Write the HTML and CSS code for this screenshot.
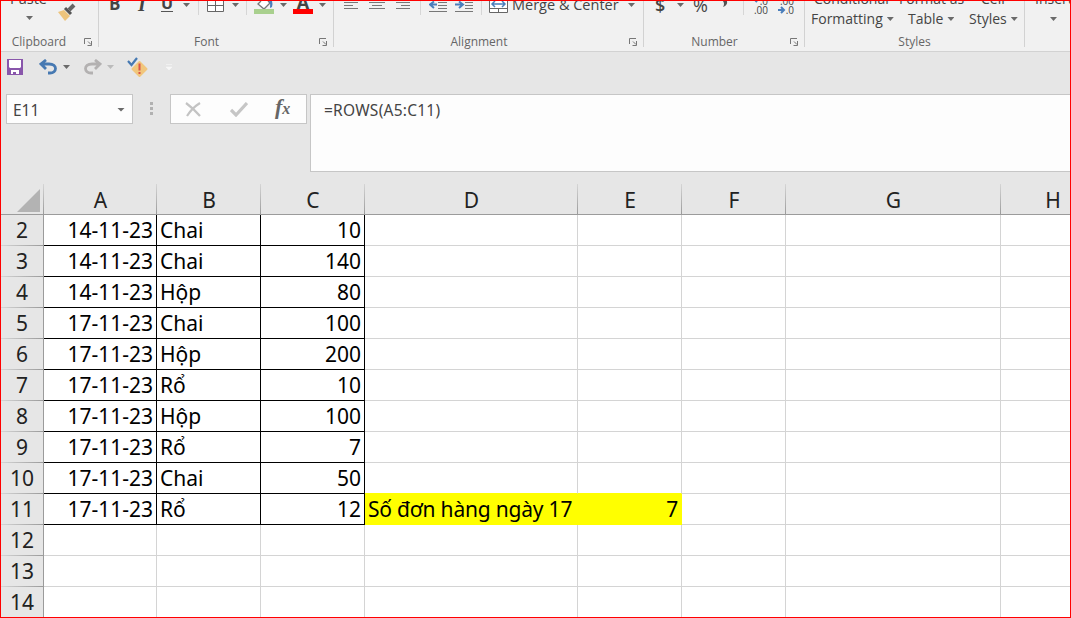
FILE: index.html
```html
<!DOCTYPE html>
<html lang="vi">
<head>
    <meta charset="UTF-8">
    <meta name="viewport" content="width=device-width, initial-scale=1.0">
    <title>Excel</title>
    <link rel="stylesheet" href="styles.css">
</head>
<body>
    <svg width="0" height="0" class="defs">
        <symbol id="launch" viewBox="0 0 9 9">
            <path d="M.5 6V.5H7M4 3.500l3 3M7.500 3v4.500H3.500" fill="none" stroke="#777"/>
        </symbol>
    </svg>
    <div class="window">
        <div class="ribbon">
            <div class="group clipboard">
                <div class="tools">
                    <div class="paste"><span>Paste</span><i class="arrow"></i></div>
                    <svg width="20" height="22" viewBox="0 0 20 22">
                        <path d="M1 11l6-2 6 6-5 5z" fill="#edc47c"/>
                        <path d="M8 7l6 6" stroke="#555" stroke-width="3"/>
                        <path d="M12 9l5-5" stroke="#666" stroke-width="4"/>
                    </svg>
                </div>
                <div class="group-name">Clipboard<svg class="launch"><use href="#launch"/></svg></div>
            </div>
            <div class="group font">
                <div class="tools">
                    <b class="letter">B</b>
                    <b class="letter italic">I</b>
                    <b class="letter underline">U</b>
                    <i class="arrow"></i>
                    <i class="sep"></i>
                    <svg width="18" height="12"><path d="M.5 0v10.500h16V0M8.500 0v10M0 4.500h17" fill="#fff" stroke="#666"/></svg>
                    <i class="arrow"></i>
                    <i class="sep"></i>
                    <svg width="21" height="14">
                        <path d="M7 0L4 3l6 5 6-6-2-2" fill="#fff" stroke="#777" stroke-width="1.300"/>
                        <path d="M15 0h3q1 3 0 6l-2 1q1-4-1-7z" fill="#4a7ebb"/>
                        <path d="M0 8h20v5H0z" fill="#a9d08e"/>
                    </svg>
                    <i class="arrow"></i>
                    <div class="font-color"><b>A</b></div>
                    <i class="arrow"></i>
                </div>
                <div class="group-name">Font<svg class="launch"><use href="#launch"/></svg></div>
            </div>
            <div class="group alignment">
                <div class="tools">
                    <svg width="16" height="10"><path d="M0 1.500h14M0 4.500h9M0 7.500h14" stroke="#777"/></svg>
                    <svg width="16" height="10"><path d="M0 1.500h16M3 4.500h10M0 7.500h16" stroke="#777"/></svg>
                    <svg width="16" height="10"><path d="M0 1.500h14M5 4.500h9M0 7.500h14" stroke="#777"/></svg>
                    <i class="sep"></i>
                    <svg width="18" height="12">
                        <path d="M9 1.500h9M9 4.500h9M9 7.500h9M0 10.500h18" stroke="#777"/>
                        <path d="M8 3.500H2M5 .5l-4 3 4 3.500" fill="none" stroke="#4a7ebb" stroke-width="2"/>
                    </svg>
                    <svg width="18" height="12">
                        <path d="M10 1.500h8M10 4.500h8M10 7.500h8M0 10.500h18" stroke="#777"/>
                        <path d="M0 3.500h7M4 .5l4 3-4 3.500" fill="none" stroke="#4a7ebb" stroke-width="2"/>
                    </svg>
                    <i class="sep"></i>
                    <svg width="19" height="12">
                        <path d="M.5 0v11.500h18V0M.5 7.500h18M9.500 7v4" fill="#fff" stroke="#666"/>
                        <path d="M3 3h13M6 0L3 3l3 3M13 0l3 3-3 3" fill="none" stroke="#4a7ebb" stroke-width="1.500"/>
                    </svg>
                    <span class="merge">Merge &amp; Center</span>
                    <i class="arrow"></i>
                </div>
                <div class="group-name">Alignment<svg class="launch"><use href="#launch"/></svg></div>
            </div>
            <div class="group number">
                <div class="tools">
                    <span class="symbol bold">$</span>
                    <i class="arrow"></i>
                    <span class="symbol">%</span>
                    <svg width="8" height="8"><path d="M2 0h4q1 4-4 6 2-3 0-6z" fill="#555"/></svg>
                    <i class="sep"></i>
                    <div class="decimal">
                        <div><svg width="7" height="4"><path d="M0 0h6M1 0l3 3" stroke="#4a7ebb" stroke-width="2"/></svg>.0</div>
                        <div>.00</div>
                    </div>
                    <div class="decimal">
                        <div>.00</div>
                        <div><svg width="8" height="8"><path d="M0 4h6M3 1l3 3-3 3" fill="none" stroke="#4a7ebb" stroke-width="2"/></svg>.0</div>
                    </div>
                </div>
                <div class="group-name">Number<svg class="launch"><use href="#launch"/></svg></div>
            </div>
            <div class="group styles">
                <div class="tools">
                    <div class="big-button conditional"><span>Conditional</span><span>Formatting<i class="arrow"></i></span></div>
                    <div class="big-button format-as"><span>Format as</span><span>Table<i class="arrow"></i></span></div>
                    <div class="big-button cell-styles"><span>Cell</span><span>Styles<i class="arrow"></i></span></div>
                </div>
                <div class="group-name">Styles</div>
            </div>
            <div class="group cells">
                <div class="tools">
                    <div class="big-button insert"><span>Insert</span><i class="arrow"></i></div>
                </div>
            </div>
        </div>

        <div class="quick-access">
            <svg width="16" height="16">
                <path d="M0 0h16v16H0z" fill="#8956ab"/>
                <path d="M2 1h12v7l-1 1H3L2 8zM4 11h8v4H9v-2H6v2H4z" fill="#fff"/>
            </svg>
            <svg width="19" height="17" viewBox="0 0 19 17">
                <path d="M2 5h8c9 0 8 9 1 9H9M7 1L2 5l5 5" fill="none" stroke="#4679b2" stroke-width="2.800"/>
            </svg>
            <i class="arrow"></i>
            <svg width="19" height="17" viewBox="0 0 19 17">
                <path d="M17 5H9C0 5 1 14 8 14h2M12 1l5 4-5 5" fill="none" stroke="#b3b1b1" stroke-width="2.800"/>
            </svg>
            <i class="arrow pale"></i>
            <svg width="21" height="21" viewBox="0 0 21 21">
                <path d="M12.500 5l7 7-7 7-7-7z" fill="#f1c67c" stroke="#f1c67c" stroke-width="2" stroke-linejoin="round"/>
                <path d="M12.500 6.500v7M12.500 15v2" stroke="#d9534a" stroke-width="2"/>
                <path d="M1 4l3.500 4L10 1" fill="none" stroke="#4679b2" stroke-width="2.200"/>
            </svg>
            <svg width="6" height="7"><path d="M0 .5h6M0 3h6L3 6z" fill="#f7f7f7" stroke="#f7f7f7" stroke-width=".6"/></svg>
        </div>

        <div class="formula-bar">
            <div class="name-box">E11<i class="arrow"></i></div>
            <div class="dots"><i></i><i></i><i></i></div>
            <div class="entry-buttons">
                <svg width="17" height="15"><path d="M1 1q8 6 14 13M15 1Q7 6 2 14" fill="none" stroke="#c3c3c3" stroke-width="2.200"/></svg>
                <svg width="18" height="15"><path d="M1 8l5 5L17 1" fill="none" stroke="#c6c6c6" stroke-width="3.200"/></svg>
                <span class="fx">f<small>x</small></span>
            </div>
            <div class="formula">=ROWS(A5:C11)</div>
        </div>

        <table class="sheet">
            <colgroup>
                <col class="w-head"><col class="w-a"><col class="w-std"><col class="w-std"><col class="w-d"><col class="w-std"><col class="w-std"><col class="w-g"><col class="w-std">
            </colgroup>
            <thead>
                <tr><th class="corner"><svg width="23" height="23"><path d="M23 0v23H0z" fill="#b3b3b3"/></svg></th><th>A</th><th>B</th><th>C</th><th>D</th><th>E</th><th>F</th><th>G</th><th>H</th></tr>
            </thead>
            <tbody>
                <tr class="data"><th>2</th><td>14-11-23</td><td>Chai</td><td>10</td><td></td><td></td><td></td><td></td><td></td></tr>
                <tr class="data"><th>3</th><td>14-11-23</td><td>Chai</td><td>140</td><td></td><td></td><td></td><td></td><td></td></tr>
                <tr class="data"><th>4</th><td>14-11-23</td><td>Hộp</td><td>80</td><td></td><td></td><td></td><td></td><td></td></tr>
                <tr class="data"><th>5</th><td>17-11-23</td><td>Chai</td><td>100</td><td></td><td></td><td></td><td></td><td></td></tr>
                <tr class="data"><th>6</th><td>17-11-23</td><td>Hộp</td><td>200</td><td></td><td></td><td></td><td></td><td></td></tr>
                <tr class="data"><th>7</th><td>17-11-23</td><td>Rổ</td><td>10</td><td></td><td></td><td></td><td></td><td></td></tr>
                <tr class="data"><th>8</th><td>17-11-23</td><td>Hộp</td><td>100</td><td></td><td></td><td></td><td></td><td></td></tr>
                <tr class="data"><th>9</th><td>17-11-23</td><td>Rổ</td><td>7</td><td></td><td></td><td></td><td></td><td></td></tr>
                <tr class="data"><th>10</th><td>17-11-23</td><td>Chai</td><td>50</td><td class="above-total"></td><td class="above-total"></td><td></td><td></td><td></td></tr>
                <tr class="data"><th>11</th><td>17-11-23</td><td>Rổ</td><td>12</td><td class="total">Số đơn hàng ngày 17</td><td class="total value">7</td><td></td><td></td><td></td></tr>
                <tr><th>12</th><td></td><td></td><td></td><td></td><td></td><td></td><td></td><td></td></tr>
                <tr><th>13</th><td></td><td></td><td></td><td></td><td></td><td></td><td></td><td></td></tr>
                <tr><th>14</th><td></td><td></td><td></td><td></td><td></td><td></td><td></td><td></td></tr>
            </tbody>
        </table>
    </div>
</body>
</html>
```
FILE: styles.css
```css
* {
    box-sizing: border-box;
}

body {
    margin: 0;
    font-family: "Open Sans", "Noto Sans", sans-serif;
    color: #444;
}

svg {
    display: block;
    flex: none;
}

.defs {
    position: absolute;
}

.window {
    width: 1071px;
    height: 618px;
    border: 1px solid #f00;
    background: #e6e6e6;
    overflow: hidden;
}

.arrow {
    display: block;
    flex: none;
    width: 7px;
    height: 4px;
    background: #6a6a6a;
    clip-path: polygon(0 0, 100% 0, 50% 100%);
}

.arrow.pale {
    background: #bbb;
}

/* Ribbon */
.ribbon {
    display: flex;
    height: 51px;
    background: #f1f1f1;
    border-bottom: 1px solid #d2d2d2;
    overflow: hidden;
}

.group {
    flex: none;
    height: 46px;
    border-right: 1px solid #d2d2d2;
}

.clipboard { width: 98px; }
.font { width: 235px; }
.alignment { width: 310px; }
.number { width: 161px; }
.styles { width: 220px; }
.cells { width: 80px; }

.tools {
    display: grid;
    align-items: start;
    height: 32px;
    padding-left: 10px;
    overflow: hidden;
}

.tools > .arrow {
    margin: 2px 0 0 1px;
}

.clipboard .tools {
    grid-template-columns: 47px 20px;
    padding-left: 9px;
}

.font .tools { grid-template-columns: 26px 25px 22px 16px 9px 24px 15px 8px 25px 14px 25px 14px; }
.alignment .tools { grid-template-columns: 25px 27px 24px 9px 26px 26px 8px 23px 115px 10px; }
.number .tools { grid-template-columns: 22px 16px 29px 22px 10px 26px 18px; }
.styles .tools { grid-template-columns: 97px 61px 50px; padding-left: 6px; }
.cells .tools { grid-template-columns: 40px; }

.paste {
    height: 22px;
    font-size: 14.5px;
    line-height: 18px;
}

.paste span {
    display: block;
    margin-top: -11px;
}

.paste .arrow {
    margin: 8px 0 0 16px;
}

.letter {
    margin-top: -8px;
    font-size: 17px;
    line-height: 22px;
}

.italic {
    padding-left: 3px;
    font-family: "Liberation Serif", serif;
    font-style: italic;
    font-size: 20px;
}

.underline {
    height: 19px;
    width: 12px;
    margin-left: 1px;
    font-size: 16px;
    line-height: 20px;
    border-bottom: 1px solid #555;
}

.sep {
    width: 1px;
    height: 14px;
    background: #d6d6d6;
}

.font-color {
    height: 13px;
    width: 20px;
    border-bottom: 5px solid #f00;
    text-align: center;
    font-size: 18px;
    line-height: 22px;
}

.font-color b {
    display: block;
    margin-top: -10px;
}

.merge {
    margin-top: -6px;
    font-size: 14.5px;
    line-height: 20px;
    white-space: nowrap;
}

.symbol {
    margin-top: -8px;
    padding-left: 1px;
    font-size: 18px;
    line-height: 24px;
}

.bold {
    font-weight: 600;
}

.decimal {
    margin-top: -5px;
    font-size: 10px;
    line-height: 8px;
}

.decimal div {
    display: flex;
    justify-content: flex-end;
    align-items: center;
    width: 15px;
    height: 9px;
}

.big-button {
    display: flex;
    flex-direction: column;
    margin-top: -12px;
    font-size: 14px;
    line-height: 20px;
    white-space: nowrap;
}

.big-button span {
    display: flex;
    align-items: center;
    gap: 4px;
}

.conditional span:first-child {
    margin-left: 3px;
}

.format-as span:first-child {
    margin-left: -9px;
}

.cell-styles span:first-child {
    margin-left: 12px;
}

.insert .arrow {
    margin: 8px 0 0 15px;
}

.group-name {
    position: relative;
    height: 16px;
    font-size: 12px;
    line-height: 18px;
    text-align: center;
    color: #666;
}

.clipboard .group-name {
    padding-right: 21px;
}

.font .group-name,
.alignment .group-name,
.number .group-name {
    padding-right: 19px;
}

.launch {
    position: absolute;
    right: 5px;
    top: 5px;
    width: 9px;
    height: 9px;
}

/* Quick access toolbar */
.quick-access {
    display: flex;
    align-items: center;
    height: 30px;
    padding-left: 6px;
}

.quick-access svg:nth-child(2) { margin-left: 16px; }
.quick-access svg:nth-child(4) { margin-left: 13px; }
.quick-access svg:nth-child(6) { margin-left: 13px; }
.quick-access svg:nth-child(7) { margin-left: 18px; }
.quick-access .arrow { margin-left: 5px; }

/* Formula bar */
.formula-bar {
    display: flex;
    align-items: flex-start;
    height: 102px;
    padding: 12px 0 0 5px;
    font-family: "Noto Sans", sans-serif;
    font-size: 15.5px;
}

.name-box,
.entry-buttons {
    display: flex;
    align-items: center;
    height: 30px;
    background: #fdfdfd;
    border: 1px solid #c6c6c6;
}

.name-box {
    justify-content: space-between;
    width: 127px;
    padding: 1px 7px 0 6px;
}

.name-box .arrow {
    width: 8px;
}

.dots {
    display: grid;
    gap: 2px;
    margin: 8px 17px 0;
}

.dots i {
    width: 3px;
    height: 3px;
    background: #b1b1b1;
}

.entry-buttons {
    width: 137px;
    padding-left: 14px;
    gap: 28px;
}

.fx {
    margin: -2px 0 0 -1px;
    font: italic bold 22px/26px "Liberation Serif", serif;
    color: #666;
}

.fx small {
    font-size: 16px;
}

.formula {
    flex: 1;
    height: 78px;
    margin-left: 3px;
    padding: 5px 13px;
    line-height: 20px;
    letter-spacing: .25px;
    background: #fdfdfd;
    border: 1px solid #c6c6c6;
    border-right: 0;
}

/* Sheet */
.sheet {
    width: 1073px;
    table-layout: fixed;
    border-collapse: separate;
    border-spacing: 0;
    font-family: "Noto Sans", sans-serif;
    font-size: 21px;
    line-height: 28px;
    color: #000;
}

.w-head { width: 43px; }
.w-a { width: 113px; }
.w-std { width: 104px; }
.w-d { width: 213px; }
.w-g { width: 215px; }

.sheet th,
.sheet td {
    height: 31px;
    padding: 0 3px;
    white-space: nowrap;
}

.sheet th {
    font-weight: 400;
    color: #222;
    padding: 0;
}

.sheet thead th {
    padding-top: 2px;
    border-bottom: 1px solid #9b9b9b;
    background: linear-gradient(#d5d5d5, #9b9b9b) right / 1px 100% no-repeat;
}

.sheet thead th:last-child {
    background: none;
}

.sheet .corner {
    padding: 0;
}

.sheet .corner svg {
    margin: 3px 0 0 16px;
}

.sheet tbody th {
    padding-bottom: 2px;
    border-right: 1px solid #9b9b9b;
    background: linear-gradient(90deg, #d5d5d5, #9b9b9b) bottom / 100% 1px no-repeat;
}

.sheet td {
    background: #fff;
    border-right: 1px solid #d4d4d4;
    border-bottom: 1px solid #d4d4d4;
}

.sheet .data td:nth-child(-n+4) {
    border-color: #000;
}

.data td:nth-child(2),
.data td:nth-child(4),
.sheet .value {
    text-align: right;
}

.sheet .above-total {
    border-bottom-color: #ff0;
}

.sheet .total {
    background: #ff0;
    border-color: #ff0;
    letter-spacing: -.2px;
}
```
